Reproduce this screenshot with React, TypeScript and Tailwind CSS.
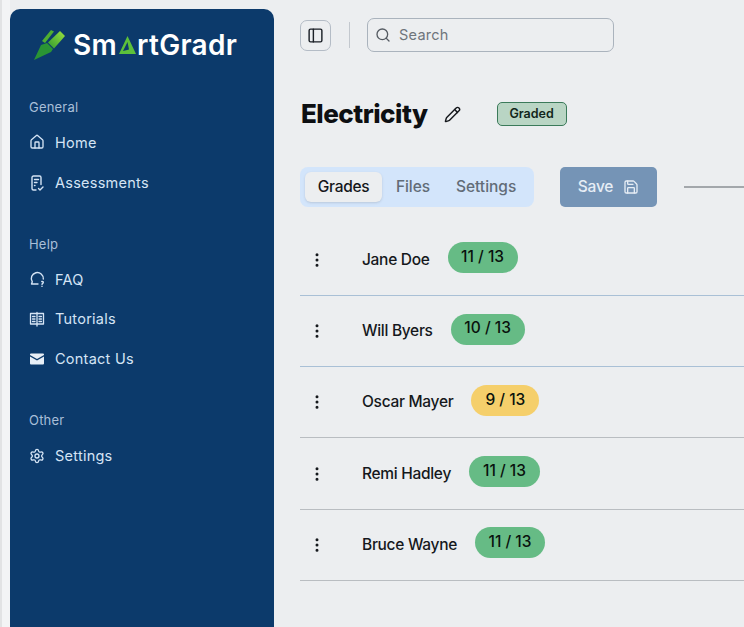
import { FC, ReactNode } from 'react';
import { Home, Settings, PanelLeft, Search, Pencil, Save, EllipsisVertical } from 'lucide-react';

const AssessmentIcon = () => (
  <svg width="16" height="16" viewBox="0 0 16 16" fill="none" stroke="currentColor" strokeWidth="1.4" strokeLinecap="round" strokeLinejoin="round">
    <path d="M7 15H4.5A1.5 1.5 0 0 1 3 13.5v-11A1.5 1.5 0 0 1 4.5 1h6A1.5 1.5 0 0 1 12 2.500v7" />
    <path d="M5.500 4.500h4M5.500 7.500h2.500M5.500 10.500h.5" />
    <path d="M9.500 13.500l1.500 1.500 3-3" />
  </svg>
);

const FaqIcon = () => (
  <svg width="16" height="16" viewBox="0 0 16 16" fill="none" stroke="currentColor" strokeWidth="1.4" strokeLinecap="round" strokeLinejoin="round">
    <path d="M9 13H2.500l.8-2.200A6 6 0 1 1 14.300 8" />
    <path d="M12.800 10.500c.8-.2 1.500.3 1.500 1 0 .8-1.200 1-1.300 1.800M13 15.300v.1" />
  </svg>
);

const BookIcon = () => (
  <svg width="16" height="16" viewBox="0 0 16 16" fill="none" stroke="currentColor" strokeWidth="1.3" strokeLinecap="round" strokeLinejoin="round">
    <path d="M8 2.500H1.500v10.500H8M8 2.500h6.500v10.500H8M8 1.500v13.500" />
    <path d="M3.500 5.500h2.500M3.500 8h2.500M3.500 10.500h2.500M10 5.500h2.500M10 8h2.500M10 10.500h2.500" />
  </svg>
);

const MailIcon = () => (
  <svg width="16" height="16" viewBox="0 0 16 16">
    <path d="M2 2.500h12a1 1 0 0 1 1 1v.4L8 8 1 3.900v-.4a1 1 0 0 1 1-1Z" fill="#e8eff7" />
    <path d="M1 5.500 8 9.600l7-4.100v7a1 1 0 0 1-1 1H2a1 1 0 0 1-1-1Z" fill="#e8eff7" />
  </svg>
);

const NavItem: FC<{ icon: ReactNode; label: string; className: string }> = ({ icon, label, className }) => (
  <div className={`flex items-center text-[14.5px] tracking-[0.25px] text-[#d5e4f5] pl-[19px] ${className}`}>
    <span className="w-[26px] flex items-center">{icon}</span>
    {label}
  </div>
);

const Heading: FC<{ label: string; className: string }> = ({ label, className }) => (
  <div className={`text-[13px] tracking-[0.2px] text-[#a9bfd8] pl-[19px] ${className}`}>{label}</div>
);

const Logo = () => (
  <div className="flex items-center pl-[22px] pt-[2px] h-[70px]">
    <svg width="34" height="36" viewBox="31 27 34 36" className="shrink-0">
      <defs>
        <linearGradient id="pen" x1="0" y1="1" x2="1" y2="0">
          <stop offset="0" stopColor="#2f9a30" />
          <stop offset="1" stopColor="#9be23f" />
        </linearGradient>
      </defs>
      <path d="M33 60 L40 45 L46 43 L52 49 L50 52 Z" fill="#2a9434" />
      <path d="M47 42.500 L59 31 L64 36 L53 48.500 Z" fill="url(#pen)" />
      <path d="M41 41 L50 30 L53 31.500 L44 43 Z" fill="#4fae30" />
    </svg>
    <div className="flex items-center ml-[7px] text-[28px] font-semibold tracking-[0.3px] text-white leading-none">
      <span>Sm</span>
      <svg width="19" height="20" viewBox="0 0 19 20" className="mx-[0.5px]">
        <path d="M9.500 1 L18 19 L1 19 Z M9.500 7 L5 16 L11 14.500 Z" fill="#5cc13a" fillRule="evenodd" />
      </svg>
      <span>rtGradr</span>
    </div>
  </div>
);

const Sidebar = () => (
  <aside className="mt-[9px] w-[264px] shrink-0 rounded-t-[10px] bg-[#0c3a6b]">
    <Logo />
    <Heading label="General" className="mt-[19px]" />
    <NavItem icon={<Home size={16} />} label="Home" className="mt-[14px]" />
    <NavItem icon={<AssessmentIcon />} label="Assessments" className="mt-[19px]" />
    <Heading label="Help" className="mt-[41px]" />
    <NavItem icon={<FaqIcon />} label="FAQ" className="mt-[14px]" />
    <NavItem icon={<BookIcon />} label="Tutorials" className="mt-[18px]" />
    <NavItem icon={<MailIcon />} label="Contact Us" className="mt-[18px]" />
    <Heading label="Other" className="mt-[41px]" />
    <NavItem icon={<Settings size={16} />} label="Settings" className="mt-[15px]" />
  </aside>
);

const rows = [
  { name: 'Jane Doe', score: '11 / 13', pill: 'bg-[#66bb85]', width: 'w-[70px]', line: 'border-[#a9c0d6]' },
  { name: 'Will Byers', score: '10 / 13', pill: 'bg-[#66bb85]', width: 'w-[74px]', line: 'border-[#a9c0d6]' },
  { name: 'Oscar Mayer', score: '9 / 13', pill: 'bg-[#f5cf6b]', width: 'w-[68px]', line: 'border-[#b9bdc1]' },
  { name: 'Remi Hadley', score: '11 / 13', pill: 'bg-[#66bb85]', width: 'w-[71px]', line: 'border-[#b9bdc1]' },
  { name: 'Bruce Wayne', score: '11 / 13', pill: 'bg-[#66bb85]', width: 'w-[70px]', line: 'border-[#b9bdc1]' },
];

const App = () => (
  <div className="flex h-[627px] w-[744px] overflow-hidden bg-[#eceef0] font-['Inter',sans-serif]">
    <div className="w-[10px] shrink-0 border-l-[2px] border-[#e2e3e4] bg-[#f3f4f5]" />
    <Sidebar />
    <main className="ml-[26px] flex-1 min-w-0">
      <div className="flex items-center mt-[18px] h-[34px]">
        <button className="flex h-[31px] w-[31px] items-center justify-center rounded-[7px] border border-[#b4bcc6] text-[#1a1f26]">
          <PanelLeft size={17} />
        </button>
        <div className="ml-[18px] h-[26px] w-px bg-[#c3c8ce]" />
        <div className="ml-[17px] flex h-[34px] w-[247px] items-center rounded-[7px] border border-[#aab3bd] pl-[7px] text-[14.5px] tracking-[0.25px] text-[#6f757c]">
          <Search size={16} className="text-[#555b62]" />
          <span className="ml-[8px]">Search</span>
        </div>
      </div>

      <div className="flex items-center mt-[46px] h-[32px] pl-px">
        <h1 className="mt-[-2px] text-[26px] font-extrabold tracking-[-0.5px] text-[#0d0f12]">Electricity</h1>
        <Pencil size={17} className="ml-[16px] text-[#15181c]" />
        <span className="ml-[36px] flex h-[24px] w-[70px] items-center justify-center rounded-[5px] border border-[#3b7a5a] bg-[#b9d5c4] text-[12.5px] font-semibold text-[#12261b]">
          Graded
        </span>
      </div>

      <div className="flex items-center mt-[37px] h-[40px]">
        <div className="flex h-[40px] w-[234px] items-center rounded-[8px] bg-[#d3e5fb] pl-[5px] text-[15.5px] font-medium text-[#626c77]">
          <span className="flex h-[30px] w-[77px] items-center justify-center rounded-[6px] bg-[#eceef0] tracking-[-0.3px] text-[#14171b] shadow-sm">Grades</span>
          <span className="ml-[14px] tracking-[-0.1px]">Files</span>
          <span className="ml-[26px]">Settings</span>
        </div>
        <button className="ml-[26px] flex h-[40px] w-[97px] items-center justify-center gap-[10px] rounded-[5px] bg-[#7594b6] text-[15.5px] font-medium tracking-[-0.2px] text-[#e6edf5]">
          Save
          <Save size={16} />
        </button>
        <div className="ml-[27px] h-[2px] flex-1 bg-[#a3a7ab]" />
      </div>

      <div className="mt-[17.6px]">
        {rows.map((row) => (
          <div key={row.name} className={`flex h-[71.3px] items-center border-b ${row.line}`}>
            <EllipsisVertical size={18} className="ml-[8px] text-[#15181c]" />
            <span className="ml-[36px] mt-[-1px] text-[15.5px] font-medium tracking-[-0.3px] text-[#15181c]">{row.name}</span>
            <span className={`ml-[18px] ${row.width} mt-[-4px] flex h-[31px] items-center justify-center rounded-full ${row.pill} pb-[2px] text-[15.5px] font-medium text-[#0a120d]`}>
              {row.score}
            </span>
          </div>
        ))}
      </div>
    </main>
  </div>
);

export default App;
